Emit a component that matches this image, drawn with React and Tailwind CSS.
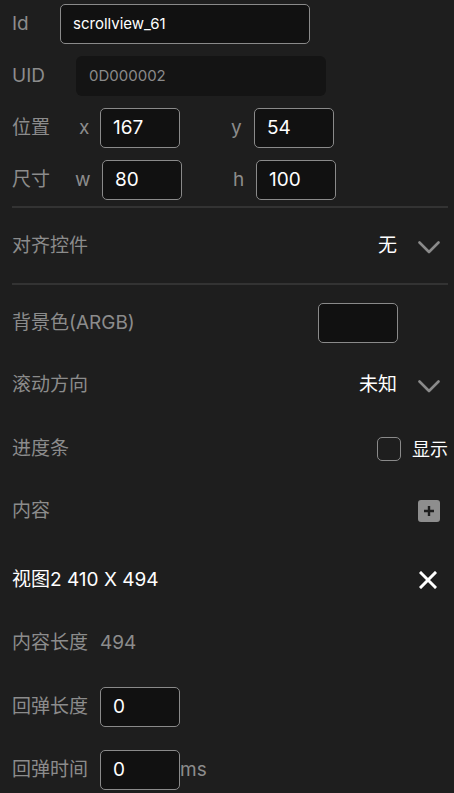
import React from "react";

const font = { fontFamily: 'Inter, "Noto Sans CJK SC", sans-serif' };

function Chevron() {
  return (
    <svg width="22" height="13" viewBox="0 0 22 13" className="ml-[21px] mr-2 mt-[2px]">
      <path d="M1.5 1.5 L11 11 L20.5 1.5" fill="none" stroke="#8a8a8a" strokeWidth="2.6" strokeLinecap="round" strokeLinejoin="round" />
    </svg>
  );
}

function Box({ value, w = "w-20", text = "text-[19px]" }) {
  return (
    <div className={`${w} h-10 shrink-0 rounded-[5px] border border-[#8a8a8a] bg-[#111111] flex items-center pl-3 text-white ${text}`}>
      {value}
    </div>
  );
}

export default function App() {
  return (
    <div className="w-[454px] h-[793px] overflow-hidden bg-[#1e1e1e] pl-3 pr-[6px] pt-1 flex flex-col text-[19px] text-[#8c8c8c]" style={font}>
      <div className="flex flex-col gap-3">
        <div className="flex items-center h-10">
          <span className="w-12 shrink-0">Id</span>
          <Box value="scrollview_61" w="w-[250px]" text="text-[15px]" />
        </div>
        <div className="flex items-center h-10">
          <span className="w-16 shrink-0">UID</span>
          <div className="w-[250px] h-10 rounded-md bg-[#141414] flex items-center pl-[13px] text-[15px] text-[#8a8a8a]">0D000002</div>
        </div>
        <div className="flex items-center h-10">
          <span className="w-[67px] shrink-0">位置</span>
          <span className="w-[21px] shrink-0">x</span>
          <Box value="167" />
          <span className="w-[51px] shrink-0" />
          <span className="w-[23px] shrink-0">y</span>
          <Box value="54" />
        </div>
        <div className="flex items-center h-10">
          <span className="w-[63px] shrink-0">尺寸</span>
          <span className="w-[27px] shrink-0">w</span>
          <Box value="80" />
          <span className="w-[51px] shrink-0" />
          <span className="w-[23px] shrink-0">h</span>
          <Box value="100" />
        </div>
      </div>

      <div className="mt-[6px] h-[2px] bg-[#333333]" />
      <div className="h-[75px] flex items-center justify-between pt-[2px]">
        <span>对齐控件</span>
        <div className="flex items-center">
          <span className="text-white">无</span>
          <Chevron />
        </div>
      </div>
      <div className="h-[2px] bg-[#333333]" />

      <div className="mt-[18px] h-10 flex items-center justify-between">
        <span>背景色(ARGB)</span>
        <div className="w-20 h-10 rounded-[5px] border border-[#8a8a8a] bg-[#111111] mr-[50px]" />
      </div>

      <div className="mt-[22px] h-10 flex items-center justify-between">
        <span>滚动方向</span>
        <div className="flex items-center">
          <span className="text-white">未知</span>
          <Chevron />
        </div>
      </div>

      <div className="mt-6 h-10 flex items-center justify-between">
        <span>进度条</span>
        <div className="flex items-center">
          <div className="w-6 h-6 rounded-[5px] border-[1.5px] border-[#8a8a8a]" />
          <span className="ml-[11px] text-white text-[18px]">显示</span>
        </div>
      </div>

      <div className="mt-[22px] h-10 flex items-center justify-between">
        <span>内容</span>
        <div className="w-[22px] h-[22px] mr-2 rounded-[3px] bg-[#8e8e8e] flex items-center justify-center">
          <svg width="12" height="12" viewBox="0 0 12 12">
            <path d="M6 1 V11 M1 6 H11" stroke="#1e1e1e" strokeWidth="2.4" />
          </svg>
        </div>
      </div>

      <div className="mt-[29px] h-10 flex items-center justify-between">
        <span className="text-white">视图2 410 X 494</span>
        <svg width="18" height="18" viewBox="0 0 18 18" className="mr-[11px]">
          <path d="M2 2 L16 16 M16 2 L2 16" stroke="#ffffff" strokeWidth="3" strokeLinecap="square" />
        </svg>
      </div>

      <div className="mt-[23px] h-10 flex items-center">
        <span>内容长度</span>
        <span className="ml-3">494</span>
      </div>

      <div className="mt-6 h-10 flex items-center">
        <span className="w-[88px] shrink-0">回弹长度</span>
        <Box value="0" />
      </div>

      <div className="mt-[23px] h-10 flex items-center">
        <span className="w-[88px] shrink-0">回弹时间</span>
        <Box value="0" />
        <span>ms</span>
      </div>
    </div>
  );
}
